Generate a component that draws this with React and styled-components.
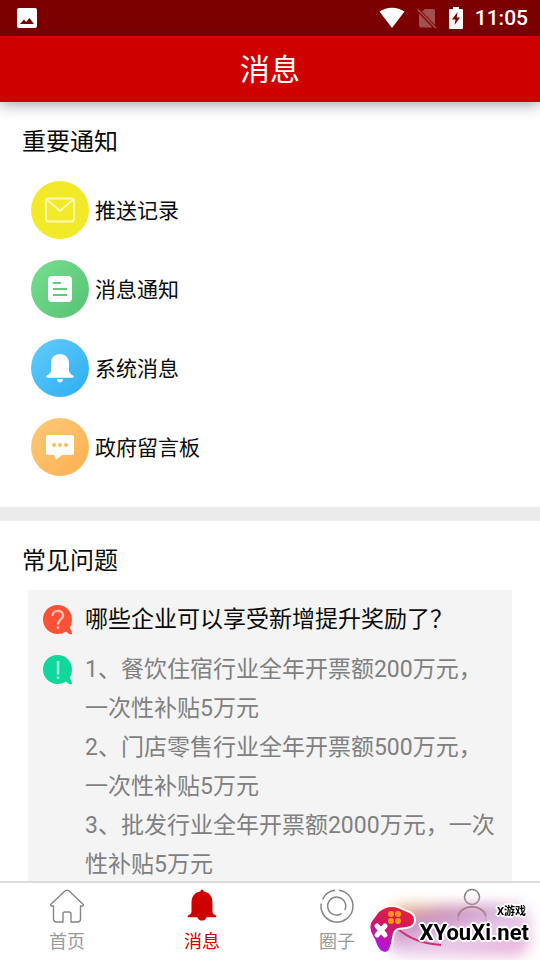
import React from "react";
import styled, { createGlobalStyle, css } from "styled-components";

const GlobalStyle = createGlobalStyle`
  * { box-sizing: border-box; }
  body {
    margin: 0;
    background: #fff;
    color: #0a0a0a;
    font-family: Roboto, "Noto Sans CJK SC", sans-serif;
  }
  h1, h2, h3, p, ul, ol { margin: 0; padding: 0; font-weight: 400; }
  ul, ol { list-style: none; }
  a { color: inherit; text-decoration: none; }
  svg { display: block; flex: none; }
`;

const Screen = styled.div`
  display: flex;
  flex-direction: column;
  height: 100vh;
  overflow: hidden;
`;

const StatusBar = styled.div`
  display: flex;
  align-items: center;
  justify-content: space-between;
  flex: none;
  height: 36px;
  padding: 0 12px 0 17px;
  background: #7c0000;
  color: #fff;
`;

const StatusGroup = styled.div`
  display: flex;
  align-items: center;
  gap: 12px;
`;

const Clock = styled.time`
  font-size: 21px;
  line-height: 38px;
  font-weight: 500;
`;

const Header = styled.header`
  position: relative;
  z-index: 1;
  flex: none;
  background: #cf0000;
  box-shadow: 0 2px 14px rgba(40, 30, 60, 0.45);
`;

const Title = styled.h1`
  padding-top: 2px;
  font-size: 30px;
  line-height: 64px;
  text-align: center;
  color: #fff;
`;

const Content = styled.main`
  flex: 1;
  min-height: 0;
  overflow: hidden;
`;

const Section = styled.section`
  padding: 18px 28px 0;
`;

const NoticeSection = styled(Section)`
  padding-bottom: 21px;
  border-bottom: 14px solid #ebebeb;
`;

const SectionTitle = styled.h2`
  margin-left: -6px;
  font-size: 24px;
  line-height: 44px;
`;

const NoticeList = styled.ul`
  margin-top: 6px;
`;

const NoticeRow = styled.a`
  display: flex;
  align-items: center;
  gap: 6px;
  height: 79px;
  padding-left: 3px;
  font-size: 21px;
`;

const NoticeLabel = styled.span`
  padding-bottom: 2px;
`;

const Disc = styled.span`
  display: grid;
  place-items: center;
  width: 58px;
  height: 58px;
  border-radius: 50%;
  background: ${(p) => p.$fill};
`;

const FaqCard = styled.article`
  display: grid;
  gap: 11px;
  margin-top: 7px;
  padding: 10px 14px 24px;
  background: #f4f4f4;
`;

const FaqRow = styled.div`
  display: grid;
  grid-template-columns: 32px 1fr;
  column-gap: 11px;
  font-size: 23px;
  line-height: 39px;
  color: ${(p) => (p.$muted ? "#808080" : "#0a0a0a")};
  svg { margin-top: 4px; }
`;

const Question = styled.h3`
  font-size: 23px;
`;

const TabBar = styled.nav`
  display: grid;
  grid-template-columns: repeat(4, 1fr);
  flex: none;
  height: 79px;
  border-top: 2px solid #dcdcdc;
  background: #fff;
`;

const Tab = styled.a`
  display: flex;
  flex-direction: column;
  align-items: center;
  gap: 4px;
  padding: 4px 1px 0 0;
  font-size: 18px;
  line-height: 26px;
  color: #999;
  ${(p) => p.$active && css`color: #cf0000;`}
`;

const Watermark = styled.div`
  position: fixed;
  right: 0;
  bottom: 0;
  width: 176px;
  height: 68px;
  color: #000;
  pointer-events: none;
`;

const MarkGlow = styled.div`
  position: absolute;
  inset: 13px 10px 4px 24px;
  background: linear-gradient(165deg, #e9b45e 5%, #bd79b5 28%, #e4c5e8 55%, #e7a4d5 90%);
  border-radius: 16px;
  filter: blur(7px);
  opacity: 0.85;
`;

const MarkArt = styled.svg`
  position: absolute;
  left: 0;
  top: 0;
`;

const MarkText = styled.div`
  position: absolute;
  right: 11px;
  top: 12px;
  display: flex;
  flex-direction: column;
  align-items: flex-end;
  font-family: Roboto, "Noto Sans CJK SC", sans-serif;
  font-weight: 700;
  text-shadow: 2px 0 #fff, -2px 0 #fff, 0 2px #fff, 0 -2px #fff,
    1px 1px #fff, -1px 1px #fff, 1px -1px #fff, -1px -1px #fff, 0 0 3px #fff;
`;

const MarkSmall = styled.span`
  padding-right: 3px;
  font-size: 11px;
  line-height: 16px;
`;

const MarkLarge = styled.span`
  font-size: 22px;
  line-height: 26px;
`;

const PictureIcon = () => (
  <svg width="20" height="20" viewBox="0 0 20 20" aria-hidden="true">
    <rect width="20" height="20" rx="2" fill="#fff" />
    <path d="M3 16l4-4.500 2 2.500 3.500-4L17 16z" fill="#7c0000" />
  </svg>
);

const WifiIcon = () => (
  <svg width="26" height="22" viewBox="0 0 26 22" aria-hidden="true">
    <path d="M.5 4.500C7.500-.6 18.500-.6 25.500 4.500L13 21z" fill="#fff" />
  </svg>
);

const NoSimIcon = () => (
  <svg width="20" height="22" viewBox="0 0 20 22" aria-hidden="true">
    <path d="M2 6.500 15.500 20.500H4q-2 0-2-2zM8 2h8.500q1.500 0 1.500 1.500v14.500L5 4.600z" fill="#a45050" />
    <path d="M.8 2.500 19 21.300" stroke="#a45050" strokeWidth="1.600" />
  </svg>
);

const BatteryIcon = () => (
  <svg width="14" height="22" viewBox="0 0 14 22" aria-hidden="true">
    <path d="M4 0h6v2h3q1 0 1 1v18q0 1-1 1H1q-1 0-1-1V3q0-1 1-1h3z" fill="#fff" />
    <path d="M8.500 5 3 12.500h3.500L5.500 18 11 10.500H7.700z" fill="#7c0000" />
  </svg>
);

const MailIcon = () => (
  <svg width="30" height="26" viewBox="0 0 30 26" fill="none" stroke="#fffbb0" strokeWidth="2" strokeLinejoin="round" aria-hidden="true">
    <rect x="1" y="1.500" width="28" height="23" rx="2.500" />
    <path d="M2 2.500l13 11.500L28 2.500" />
  </svg>
);

const DocIcon = () => (
  <svg width="24" height="26" viewBox="0 0 24 26" aria-hidden="true">
    <rect width="24" height="26" rx="4" fill="#fff" />
    <path d="M5 7h8M5 13h14M5 19h14" stroke="#62ca7c" strokeWidth="2.200" />
  </svg>
);

const BellIcon = () => (
  <svg width="28" height="30" viewBox="0 0 28 30" fill="#fff" aria-hidden="true">
    <path d="M14 1C8.500 1 5 5 5 10v6c0 4-1.500 5-4 6.500Q-.4 23.500.8 24.800h26.400q1.200-1.300-.2-2.300C24.500 21 23 20 23 16v-6C23 5 19.500 1 14 1zM11 26h6c0 4.500-6 4.500-6 0z" />
  </svg>
);

const ChatIcon = () => (
  <svg width="28" height="26" viewBox="0 0 28 26" aria-hidden="true">
    <path d="M2.500 1h23Q28 1 28 3.500v15q0 2.500-2.500 2.500H16l-5 4q-1 .8-1.400-.4L8.500 21h-6Q0 21 0 18.500v-15Q0 1 2.500 1z" fill="#fff" />
    <g fill="#fcbb60"><circle cx="8" cy="11" r="2" /><circle cx="14" cy="11" r="2" /><circle cx="20" cy="11" r="2" /></g>
  </svg>
);

const bubble = "M15.500 1C7 1 1 7.500 1 15.500S7.500 30 15.500 30q5 0 8.500-2.500 3 3 5.500 2.800 1.200-.4.300-1.800L28 23.500q2-3.500 2-8C30 7 23.500 1 15.500 1z";

const QuestionIcon = () => (
  <svg width="32" height="32" viewBox="0 0 32 32" aria-hidden="true">
    <path d={bubble} fill="#fa5137" />
    <path d="M10.500 12c0-7 10.500-6.500 10.500-.5 0 4-5 4-5 9M16 22.500v2.500" fill="none" stroke="#ffc4b5" strokeWidth="2.400" />
  </svg>
);

const AnswerIcon = () => (
  <svg width="32" height="32" viewBox="0 0 32 32" aria-hidden="true">
    <path d={bubble} fill="#10d79b" />
    <path d="M16 7v13.500M16 22.500v2.500" stroke="#a9ffe0" strokeWidth="2.400" />
  </svg>
);

const HomeIcon = () => (
  <svg width="36" height="38" viewBox="0 0 36 38" fill="none" stroke="#858585" strokeWidth="1.400" strokeLinejoin="round" aria-hidden="true">
    <path d="M4.500 19H2.200q-1.400-.8 0-2L16.500 3.600q1.500-1 3 0L33.800 17q1.400 1.200 0 2H31.500v13q0 3-3 3H22v-8q0-2-2-2h-4q-2 0-2 2v8H7.500q-3 0-3-3z" />
  </svg>
);

const TabBellIcon = () => (
  <svg width="32" height="38" viewBox="0 0 32 38" fill="#cf0000" aria-hidden="true">
    <path d="M16 2.500q1.300 0 1.700 2C23.500 5.500 26.500 9.500 26.500 16v8.500q0 2.500 3 3.500 1.500 1.200.5 2.200H20.500c-1 4.500-8 4.500-9 0H2q-1-1 .5-2.200 3-1 3-3.500V16C5.500 9.500 8.500 5.500 14.300 4.500Q14.700 2.500 16 2.500z" />
  </svg>
);

const CircleIcon = () => (
  <svg width="36" height="38" viewBox="0 0 36 38" fill="none" stroke="#858585" strokeWidth="1.500" aria-hidden="true">
    <path d="M20 3.200A16 16 0 1 1 2.200 16.500M3.500 12.500A16 16 0 0 1 16 3.200" />
    <path d="M22.500 26.700A9 9 0 1 1 25.800 23" />
  </svg>
);

const PersonIcon = () => (
  <svg width="36" height="38" viewBox="0 0 36 38" fill="none" stroke="#858585" strokeWidth="1.500" aria-hidden="true">
    <circle cx="18" cy="10" r="7.500" />
    <path d="M4 34c0-19 28-19 28 0" />
  </svg>
);

const notices = [
  { label: "推送记录", fill: "#f2e928", Icon: MailIcon },
  { label: "消息通知", fill: "linear-gradient(135deg, #76df8e, #57c274)", Icon: DocIcon },
  { label: "系统消息", fill: "linear-gradient(135deg, #66cbfb, #29aef0)", Icon: BellIcon },
  { label: "政府留言板", fill: "linear-gradient(135deg, #fdc978, #fcb04f)", Icon: ChatIcon },
];

const answers = [
  "1、餐饮住宿行业全年开票额200万元，一次性补贴5万元",
  "2、门店零售行业全年开票额500万元，一次性补贴5万元",
  "3、批发行业全年开票额2000万元，一次性补贴5万元",
];

const tabs = [
  { label: "首页", Icon: HomeIcon },
  { label: "消息", Icon: TabBellIcon, active: true },
  { label: "圈子", Icon: CircleIcon },
  { label: "", name: "个人", Icon: PersonIcon },
];

export default function App() {
  return (
    <Screen>
      <GlobalStyle />
      <StatusBar>
        <PictureIcon />
        <StatusGroup>
          <WifiIcon />
          <NoSimIcon />
          <BatteryIcon />
          <Clock>11:05</Clock>
        </StatusGroup>
      </StatusBar>
      <Header><Title>消息</Title></Header>
      <Content>
        <NoticeSection>
          <SectionTitle>重要通知</SectionTitle>
          <NoticeList>
            {notices.map(({ label, fill, Icon }) => (
              <li key={label}>
                <NoticeRow href="#">
                  <Disc $fill={fill}><Icon /></Disc>
                  <NoticeLabel>{label}</NoticeLabel>
                </NoticeRow>
              </li>
            ))}
          </NoticeList>
        </NoticeSection>
        <Section>
          <SectionTitle>常见问题</SectionTitle>
          <FaqCard>
            <FaqRow>
              <QuestionIcon />
              <Question>哪些企业可以享受新增提升奖励了？</Question>
            </FaqRow>
            <FaqRow $muted>
              <AnswerIcon />
              <ol>{answers.map((text) => <li key={text}>{text}</li>)}</ol>
            </FaqRow>
          </FaqCard>
        </Section>
      </Content>
      <TabBar>
        {tabs.map(({ label, name, Icon, active }) => (
          <Tab key={label || name} href="#" aria-label={name} $active={active} aria-current={active ? "page" : undefined}>
            <Icon />{label}
          </Tab>
        ))}
      </TabBar>
      <Watermark>
        <MarkGlow />
        <MarkArt width="176" height="68" viewBox="0 0 176 68" aria-hidden="true">
          <defs>
            <linearGradient id="pad" x1="0.700" y1="0" x2="0.300" y2="1">
              <stop offset="0" stopColor="#e52336" />
              <stop offset=".45" stopColor="#d01862" />
              <stop offset="1" stopColor="#ad16ed" />
            </linearGradient>
          </defs>
          <path d="M94 24c2-12 26-12 28 0" fill="none" stroke="#a87a72" strokeWidth="1.500" opacity=".7" />
          <path d="M33 36c12 11 28 16 44 17" fill="none" stroke="#d52b77" strokeWidth="2" />
          <path d="M15 20Q24 13 34 16l9 4q7 2 7 8 0 6-8 7l-8 1q-5 1-6 10-2 14-7 14-6 0-10-13Q3 35 9 28z" fill="url(#pad)" stroke="#fff" strokeWidth="4" strokeLinejoin="round" paintOrder="stroke" />
          <g fill="#ff9818">
            <circle cx="27" cy="22" r="3" /><circle cx="34" cy="22" r="3" />
            <circle cx="27" cy="29" r="3" /><circle cx="34" cy="29" r="3" />
          </g>
          <path d="M13 34l8 9M21 34l-8 9" stroke="#fff" strokeWidth="5" strokeLinecap="round" />
        </MarkArt>
        <MarkText>
          <MarkSmall>X游戏</MarkSmall>
          <MarkLarge>XYouXi.net</MarkLarge>
        </MarkText>
      </Watermark>
    </Screen>
  );
}
